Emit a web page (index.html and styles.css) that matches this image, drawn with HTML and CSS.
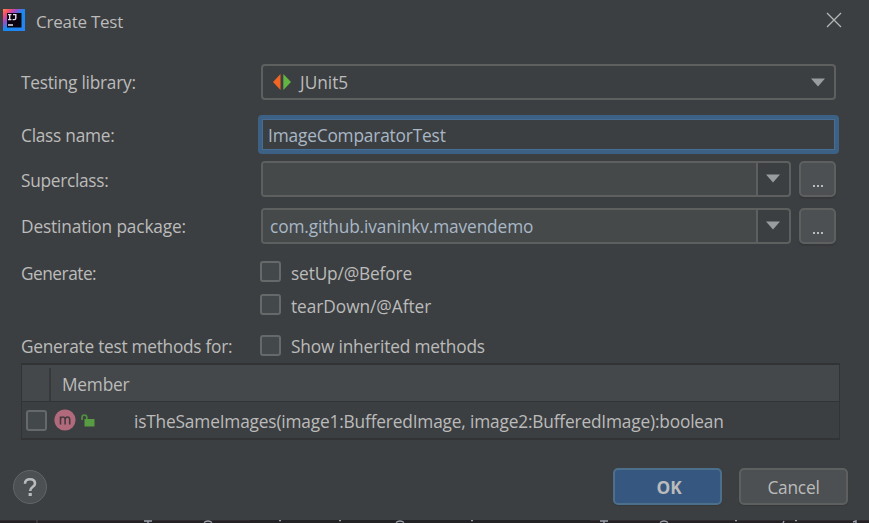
FILE: index.html
```html
<!DOCTYPE html>
<html lang="en">
<head>
<meta charset="utf-8">
<title>Create Test</title>
<link rel="stylesheet" href="styles.css">
</head>
<body>
<main class="dialog">
  <header class="titlebar">
    <svg class="logo" width="22" height="22" viewBox="0 0 22 22">
      <defs>
        <linearGradient id="g" x1="0" y1="0" x2="1" y2="1">
          <stop offset="0" stop-color="#f7894a"/><stop offset=".15" stop-color="#fb4f67"/><stop offset=".32" stop-color="#a24bc4"/><stop offset=".5" stop-color="#168af0"/><stop offset="1" stop-color="#2883f5"/>
        </linearGradient>
      </defs>
      <rect width="22" height="22" fill="url(#g)"/>
      <rect x="4" y="4" width="14.5" height="14.5" fill="#090410"/>
      <path d="M5 5.6h3.4M6.7 5.6v5M5 10.6h3.4M10 5.6h2.8v3.6q0 1.4-1.4 1.4H9.6M5 16h5" fill="none" stroke="#e6dde8" stroke-width="1.4"/>
    </svg>
    <h1 class="title">Create Test</h1>
    <svg class="close" width="16" height="16" viewBox="0 0 16 16"><path d="M1 1l14 14M15 1L1 15" stroke="#b4b6b7" stroke-width="1.3"/></svg>
  </header>

  <form class="form">
    <div class="row library">
      <label class="t-library">Testing library:</label>
      <div class="select">
        <svg class="junit" width="18" height="16" viewBox="0 0 18 16"><path d="M0 8L7.5 0v16z" fill="#f26522"/><path d="M18 8L10.3 0v16z" fill="#62b543"/></svg>
        <span class="t-junit">JUnit5</span>
        <svg class="arrow" width="14" height="9" viewBox="0 0 14 9"><path d="M0 .5h14L7 8.5z" fill="#9a9da0"/></svg>
      </div>
    </div>
    <div class="row classname">
      <label class="t-class">Class name:</label>
      <div class="focused"><span class="t-value">ImageComparatorTest</span></div>
    </div>
    <div class="row superclass">
      <label class="t-super">Superclass:</label>
      <div class="combo">
        <div class="entry"></div>
        <div class="drop"><svg width="14" height="9" viewBox="0 0 14 9"><path d="M0 .5h14L7 8.5z" fill="#9a9da0"/></svg></div>
      </div>
      <div class="browse"><i></i><i></i><i></i></div>
    </div>
    <div class="row package">
      <label class="t-dest">Destination package:</label>
      <div class="combo">
        <div class="entry"><span class="t-package">com.github.ivaninkv.mavendemo</span></div>
        <div class="drop"><svg width="14" height="9" viewBox="0 0 14 9"><path d="M0 .5h14L7 8.5z" fill="#9a9da0"/></svg></div>
      </div>
      <div class="browse"><i></i><i></i><i></i></div>
    </div>
    <div class="row check">
      <label class="t-generate">Generate:</label>
      <span class="box"></span><span class="t-setup">setUp/@Before</span>
    </div>
    <div class="row check second">
      <label></label>
      <span class="box"></span><span class="t-teardown">tearDown/@After</span>
    </div>
    <div class="row check third">
      <label class="t-methods">Generate test methods for:</label>
      <span class="box"></span><span class="t-show">Show inherited methods</span>
    </div>
  </form>

  <section class="table">
    <div class="thead"><div class="gutter"></div><span class="t-member">Member</span></div>
    <div class="item">
      <span class="box"></span>
      <svg class="method" width="22" height="22" viewBox="0 0 22 22"><circle cx="11" cy="11" r="10.6" fill="#b06a7b"/><path d="M6.5 15.5V7.6M6.5 10q.4-2 2.4-2t2.2 2.2v5.3M11.1 10.2q.4-2.2 2.4-2.2t2.2 2.2v5.3" fill="none" stroke="#453a40" stroke-width="1.6"/></svg>
      <svg class="lock" width="14" height="13" viewBox="0 0 14 13"><path d="M1 6V3.6Q1 1 3.4 1T5.8 3.6V6" fill="none" stroke="#50913f" stroke-width="1.7"/><rect x="3.5" y="5" width="10" height="7.5" fill="#579b42"/></svg>
      <span class="t-signature">isTheSameImages(image1:BufferedImage, image2:BufferedImage):boolean</span>
    </div>
  </section>

  <footer class="actions">
    <div class="help"><svg width="14" height="20" viewBox="0 0 14 20"><path d="M2 6.8Q2 2.2 7 2.2t5 4.2q0 2-2.4 3.6Q7.2 11.6 7.2 14" fill="none" stroke="#b9bbbc" stroke-width="2.6"/><rect x="5.6" y="16" width="3.2" height="3" fill="#b9bbbc"/></svg></div>
    <div class="button ok"><span class="t-ok">OK</span></div>
    <div class="button"><span class="t-cancel">Cancel</span></div>
  </footer>
</main>
<svg class="backdrop" width="869" height="3" viewBox="0 0 869 3">
  <rect width="869" height="3" fill="#222124"/>
  <path d="M0 .5h250M590 .5h279" stroke="#302a2f"/>
  <path d="M37 0v3" stroke="#545155"/>
  <path d="M144 1h8M148 1v2M600 1h8M604 1v2M204 2.5q4-3 8 0M396 2.5q4-3 8 0M660 2.5q4-3 8 0M279 .5h2M339 .5h2M471 .5h2M735 .5h2M783 3l1-2M795 .5h2M853 2l3-1v2" fill="none" stroke="#9aa0ac" stroke-width="1.4"/>
</svg>
</body>
</html>
```
FILE: styles.css
```css
* { box-sizing: border-box; }
body {
  margin: 0; width: 869px; height: 523px; overflow: hidden;
  background: #3c3f41; color: #bbbbbb;
  font: 17.3px/24px "Open Sans", "Noto Sans", sans-serif;
  white-space: nowrap;
}
svg { display: block; flex: none; }
.dialog { height: 520px; display: flex; flex-direction: column; }
.titlebar { height: 64px; flex: none; display: flex; align-items: flex-start; padding: 9px 27px 0 3px; }
.title { margin: 1px auto 0 11px; font-size: 17px; line-height: 24px; font-weight: 400; letter-spacing: -.25px; }
.close { margin-top: 3px; }
.form { display: flex; flex-direction: column; padding: 0 31px 0 21px; height: 299px; flex: none; }
.row { display: flex; align-items: center; height: 36px; flex: none; }
.row label { width: 240px; flex: none; padding-top: 2px; }
.select { width: 575px; height: 36px; border: 2px solid #5e6060; border-radius: 4px; display: flex; align-items: center; padding: 0 9px 0 10px; }
.junit { margin-right: 9px; }
.arrow { margin-left: auto; }
.classname { height: 39px; margin-top: 15px; }
.row.classname label { width: 237px; }
.focused { width: 581px; height: 39px; flex: none; border: 4px solid #3d6185; border-radius: 4px; display: flex; align-items: center; padding-left: 6px; box-shadow: inset 0 0 0 1px #466d94; color: #a9b7c6; }
.superclass { margin-top: 7px; }
.row.superclass label { padding-top: 4px; }
.package { margin-top: 11px; }
.combo { width: 530px; height: 36px; border: 2px solid #5e6060; border-radius: 4px; display: flex; overflow: hidden; }
.entry { flex: 1; background: #45494a; padding-left: 7px; line-height: 34px; color: #a9b7c6; }
.drop { width: 33px; border-left: 2px solid #5e6060; display: flex; align-items: center; justify-content: center; padding: 0 2px 1px 0; }
.browse { width: 37px; height: 36px; margin-left: 8px; border: 2px solid #5e6060; border-radius: 5px; background: #4c5052; box-shadow: 0 2px 1px #36393b; display: flex; justify-content: center; gap: 2px; padding-top: 22px; }
.browse i { width: 2px; height: 2px; background: #bbb; }
.check { height: 21px; margin-top: 17px; }
.second { margin-top: 12px; }
.third { margin-top: 20px; }
.box { width: 21px; height: 21px; flex: none; border: 2px solid #66696a; border-radius: 3px; background: #43494a; }
.check .box { margin: 0 10px 0 -1px; }
.row.check label { padding-top: 4px; }
.check > span:last-child { padding-top: 4px; }
.row.third label, .third > span:last-child { padding-top: 2px; }
.table { width: 819px; height: 77px; margin-left: 21px; flex: none; border: 1px solid #313335; border-top-width: 2px; border-bottom-width: 2px; }
.thead { height: 37px; background: #45484a; border-bottom: 1px solid #313335; display: flex; align-items: center; padding-top: 3px; }
.gutter { width: 29px; height: 33px; border-right: 2px solid #36393b; align-self: flex-start; margin-right: 11px; }
.item { height: 36px; display: flex; align-items: center; padding-left: 4px; }
.method { margin-left: 7px; }
.lock { margin: 1px 39px 0 5px; }
.t-signature, .t-junit { padding-top: 2px; }
.t-signature { padding-top: 3px; }
.t-value { padding-top: 2px; }
.actions { display: flex; padding: 28px 21px 0 13px; }
.help { width: 34px; height: 34px; margin: 2px auto 0 0; border-radius: 50%; border: 1px solid #626566; background: #4c5052; display: flex; align-items: center; justify-content: center; }
.button { width: 109px; height: 37px; margin-left: 17px; border: 2px solid #5e6060; border-radius: 5px; background: #4c5052; box-shadow: 0 1px 1px #36393b; display: flex; align-items: center; justify-content: center; padding-top: 2px; }
.ok { background: #365880; border-color: #4c708c; font-weight: 700; padding-left: 3px; }

/* Tracking */
.t-library, .t-class { letter-spacing: -.25px; }
.t-super { letter-spacing: -.3px; }
.t-dest { letter-spacing: -.15px; }
.t-generate { letter-spacing: -.5px; }
.t-methods { letter-spacing: -.27px; }
.t-value, .t-show, .t-signature { letter-spacing: -.17px; }
.t-package { letter-spacing: -.13px; }
.t-setup { letter-spacing: -.15px; }
.t-teardown { letter-spacing: -.05px; }
.t-member, .t-cancel { letter-spacing: -.2px; }
```
